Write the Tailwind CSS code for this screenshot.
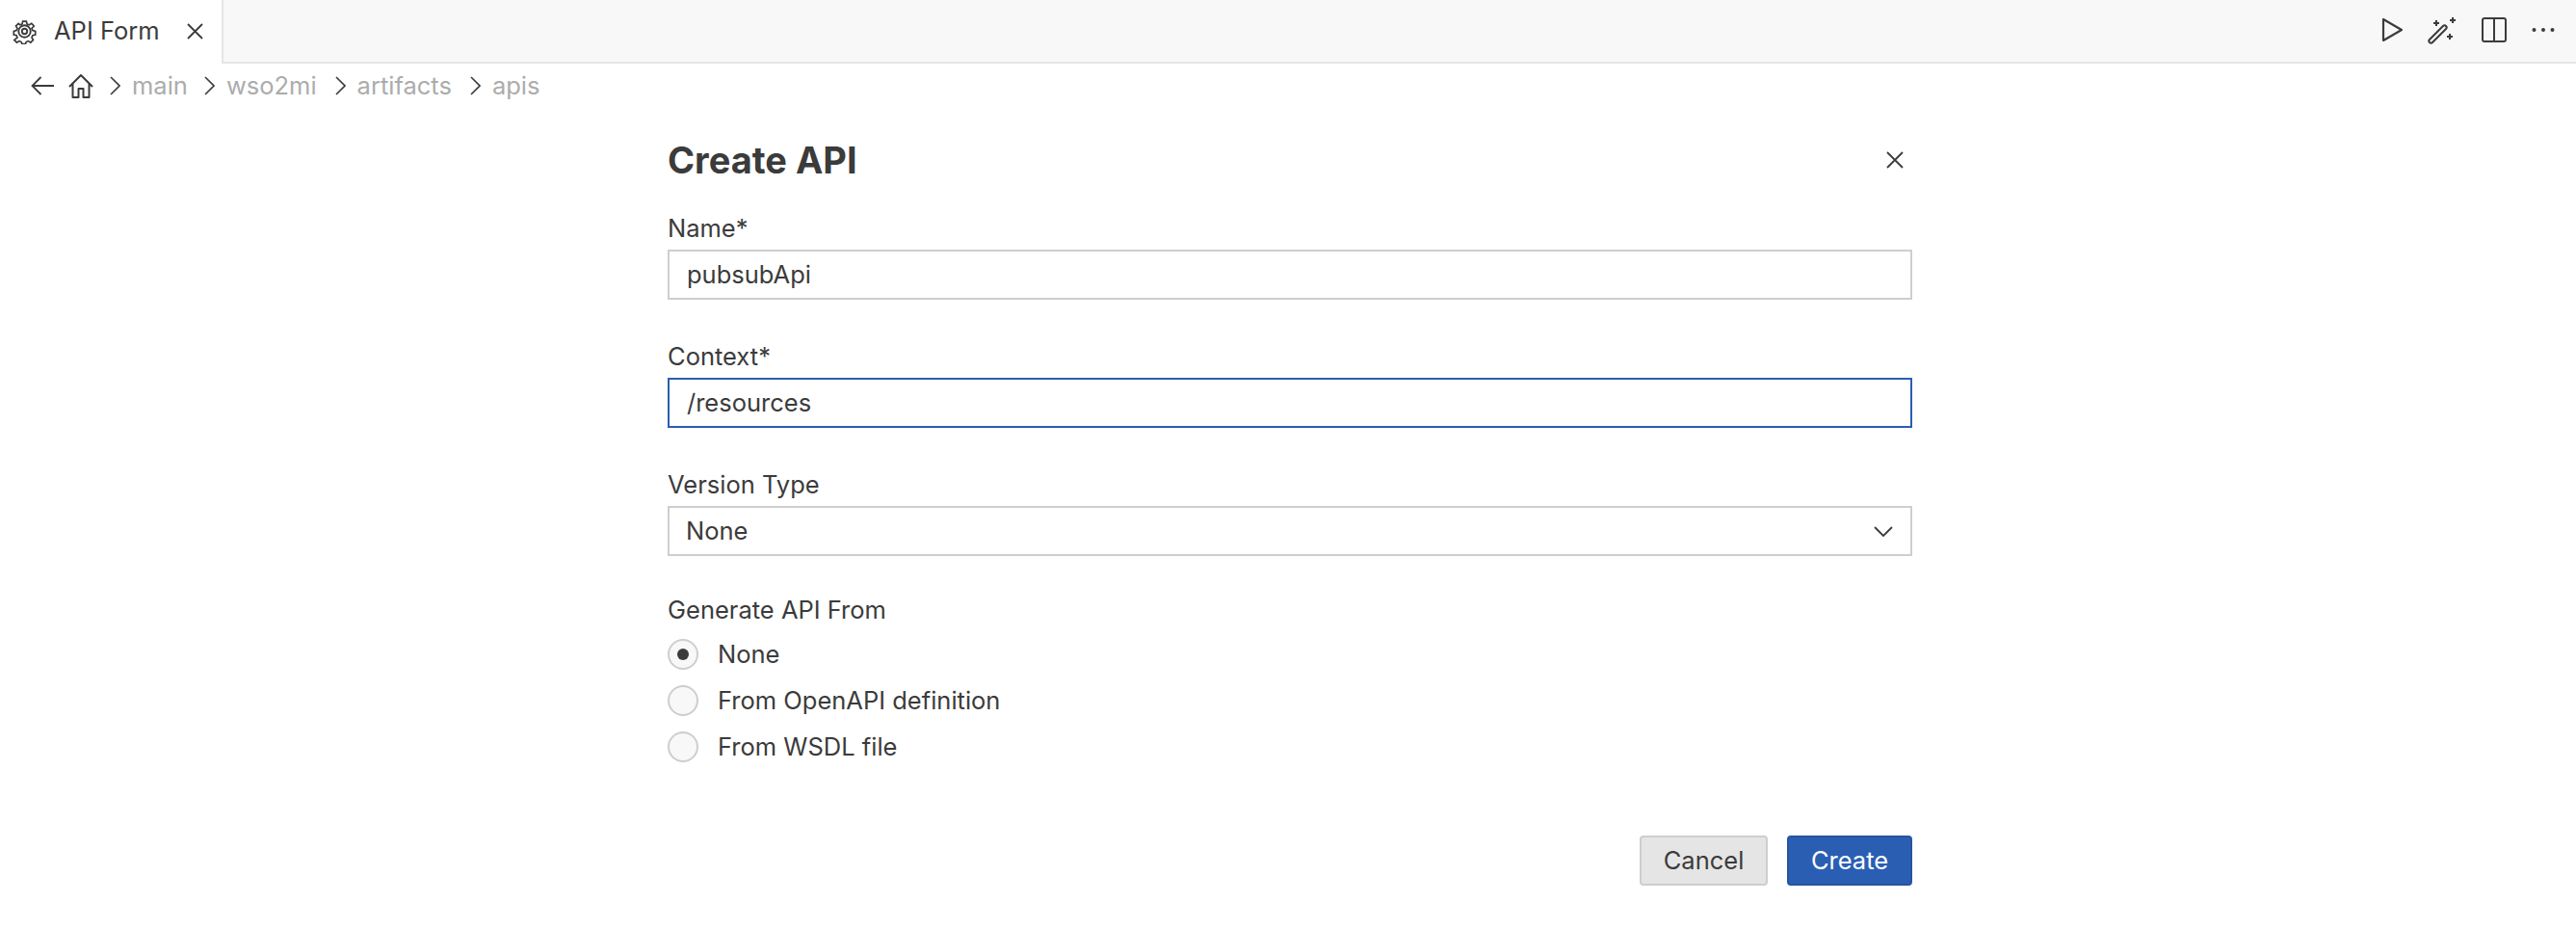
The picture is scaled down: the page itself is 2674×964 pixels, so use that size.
<!DOCTYPE html>
<html lang="en">
<head>
  <meta charset="UTF-8" />
  <title>API Form</title>
  <script src="https://cdn.jsdelivr.net/npm/@tailwindcss/browser@4"></script>
</head>
<body class="bg-white text-[#3b3b3b] font-['Inter',sans-serif] text-[25.5px] h-[964px] w-[2674px] overflow-hidden">

  <!-- tab bar -->
  <header class="h-[66px] bg-[#f8f8f8] border-b-2 border-[#e5e5e5] flex justify-between">
    <div class="w-[232px] h-[66px] bg-white border-r-2 border-[#e5e5e5] flex items-center pl-[12px] pb-[2px] whitespace-nowrap">
      <svg class="w-[27px] h-[27px] shrink-0" viewBox="0 0 26 26" fill="none" stroke="#3b3b3b" stroke-width="1.8">
        <path d="M11 2h4l.7 3 2.3 1 2.7-1.6 2.8 2.8L21 9.900l1 2.300 3 .8v4l-3 .7-1 2.300 1.600 2.700-2.800 2.800-2.700-1.600-2.300 1-.7 2.100h-4l-.7-2.100-2.300-1-2.700 1.600-2.800-2.800L5 20l-1-2.300-3-.7v-4l3-.8 1-2.300-1.600-2.700 2.800-2.800L8 6l2.300-1z" transform="translate(1.3 1.2) scale(.9)" />
        <circle cx="13" cy="13" r="6" />
        <circle cx="13" cy="13" r="2.600" />
      </svg>
      <span class="ml-[17px] w-[110px]">API Form</span>
      <svg class="ml-[28px] w-[17px] h-[17px] shrink-0" viewBox="0 0 17 17" fill="none" stroke="#3b3b3b" stroke-width="1.8"><path d="M1 1l15 15M16 1L1 16" /></svg>
    </div>
    <div class="flex items-center pr-[22px] pb-[2px]">
      <svg class="w-[23px] h-[28px]" viewBox="0 0 23 28" fill="none" stroke="#3b3b3b" stroke-width="2.200" stroke-linejoin="round"><path d="M2 3v22l19-11z" /></svg>
      <svg class="ml-[25px] w-[30px] h-[30px]" viewBox="0 0 30 30" fill="none" stroke="#3b3b3b" stroke-width="2"><path d="M2 25L16 11a2 2 0 0 1 3 3L5 28a2 2 0 0 1-3-3z" /><path d="M6 8h6M9 5v6M23 5h6M26 2v6M20 22h6M23 19v6" /></svg>
      <svg class="ml-[26px] w-[26px] h-[26px]" viewBox="0 0 26 26" fill="none" stroke="#3b3b3b" stroke-width="2"><rect x="1" y="1" width="24" height="24" rx="2" /><path d="M13 1v24" /></svg>
      <svg class="ml-[26px] w-[24px] h-[6px]" viewBox="0 0 24 6" fill="#3b3b3b"><circle cx="2.500" cy="3" r="2" /><circle cx="12" cy="3" r="2" /><circle cx="21.500" cy="3" r="2" /></svg>
    </div>
  </header>

  <!-- breadcrumbs -->
  <nav class="h-[44px] flex items-center pl-[32px] pt-[2px] text-[#acacac]">
    <svg class="w-[24px] h-[22px]" viewBox="0 0 24 22" fill="none" stroke="#3b3b3b" stroke-width="1.8"><path d="M24 11H1.500M10.500 2l-9 9 9 9" /></svg>
    <svg class="ml-[15px] w-[26px] h-[26px]" viewBox="0 0 26 26" fill="none" stroke="#3b3b3b" stroke-width="2" stroke-linejoin="round"><path d="M1 14L13 2l12 12M4.500 11v14h6v-9h5v9h6V11" /></svg>
    <svg class="ml-[16px] w-[12px] h-[20px]" viewBox="0 0 12 20" fill="none" stroke="#3b3b3b" stroke-width="1.6"><path d="M2 1l9 9-9 9" /></svg>
    <span class="ml-[12px]">main</span>
    <svg class="ml-[16px] w-[12px] h-[20px]" viewBox="0 0 12 20" fill="none" stroke="#3b3b3b" stroke-width="1.6"><path d="M2 1l9 9-9 9" /></svg>
    <span class="ml-[12px]">wso2mi</span>
    <svg class="ml-[18px] w-[12px] h-[20px]" viewBox="0 0 12 20" fill="none" stroke="#3b3b3b" stroke-width="1.6"><path d="M2 1l9 9-9 9" /></svg>
    <span class="ml-[12px]">artifacts</span>
    <svg class="ml-[18px] w-[12px] h-[20px]" viewBox="0 0 12 20" fill="none" stroke="#3b3b3b" stroke-width="1.6"><path d="M2 1l9 9-9 9" /></svg>
    <span class="ml-[12px]">apis</span>
  </nav>

  <!-- form -->
  <main class="ml-[693px] w-[1292px]">
    <div class="h-[58px] mt-[27px] flex items-center justify-between">
      <h1 class="text-[38px] font-bold leading-none">Create API</h1>
      <svg class="mr-[9px] w-[18px] h-[18px]" viewBox="0 0 18 18" fill="none" stroke="#3b3b3b" stroke-width="1.8"><path d="M1 1l16 16M17 1L1 17" /></svg>
    </div>

    <label class="block mt-[25px] h-[32px] leading-[34px]">Name*</label>
    <div class="mt-[7px] h-[52px] border-2 border-[#cecece] flex items-center pl-[18px]">pubsubApi</div>

    <label class="block mt-[42px] h-[32px] leading-[34px]">Context*</label>
    <div class="mt-[7px] h-[52px] border-2 border-[#2a5eb3] flex items-center pl-[18px]">/resources</div>

    <label class="block mt-[42px] h-[32px] leading-[34px]">Version Type</label>
    <div class="mt-[7px] h-[52px] border-2 border-[#cecece] flex items-center justify-between pl-[17px] pr-[18px]">
      <span>None</span>
      <svg class="w-[20px] h-[11px]" viewBox="0 0 20 11" fill="none" stroke="#3b3b3b" stroke-width="1.8"><path d="M1 1l9 9 9-9" /></svg>
    </div>

    <label class="block mt-[39px] h-[32px] leading-[34px]">Generate API From</label>
    <div class="mt-[7px] flex flex-col">
      <div class="h-[48px] flex items-center gap-[20px]">
        <span class="w-[32px] h-[32px] rounded-full border-2 border-[#cecece] bg-[#f8f8f8] flex items-center justify-center">
          <span class="w-[12px] h-[12px] rounded-full bg-[#3b3b3b]"></span>
        </span>
        None
      </div>
      <div class="h-[48px] flex items-center gap-[20px]">
        <span class="w-[32px] h-[32px] rounded-full border-2 border-[#cecece] bg-[#f8f8f8]"></span>
        From OpenAPI definition
      </div>
      <div class="h-[48px] flex items-center gap-[20px]">
        <span class="w-[32px] h-[32px] rounded-full border-2 border-[#cecece] bg-[#f8f8f8]"></span>
        From WSDL file
      </div>
    </div>

    <div class="mt-[68px] flex justify-end gap-[20px]">
      <button class="w-[133px] h-[52px] rounded-[4px] border-2 border-[#cecece] bg-[#e5e5e5] text-[#3b3b3b]">Cancel</button>
      <button class="w-[130px] h-[52px] rounded-[4px] border-2 border-[#2655a0] bg-[#2a5eb3] text-white">Create</button>
    </div>
  </main>
</body>
</html>
